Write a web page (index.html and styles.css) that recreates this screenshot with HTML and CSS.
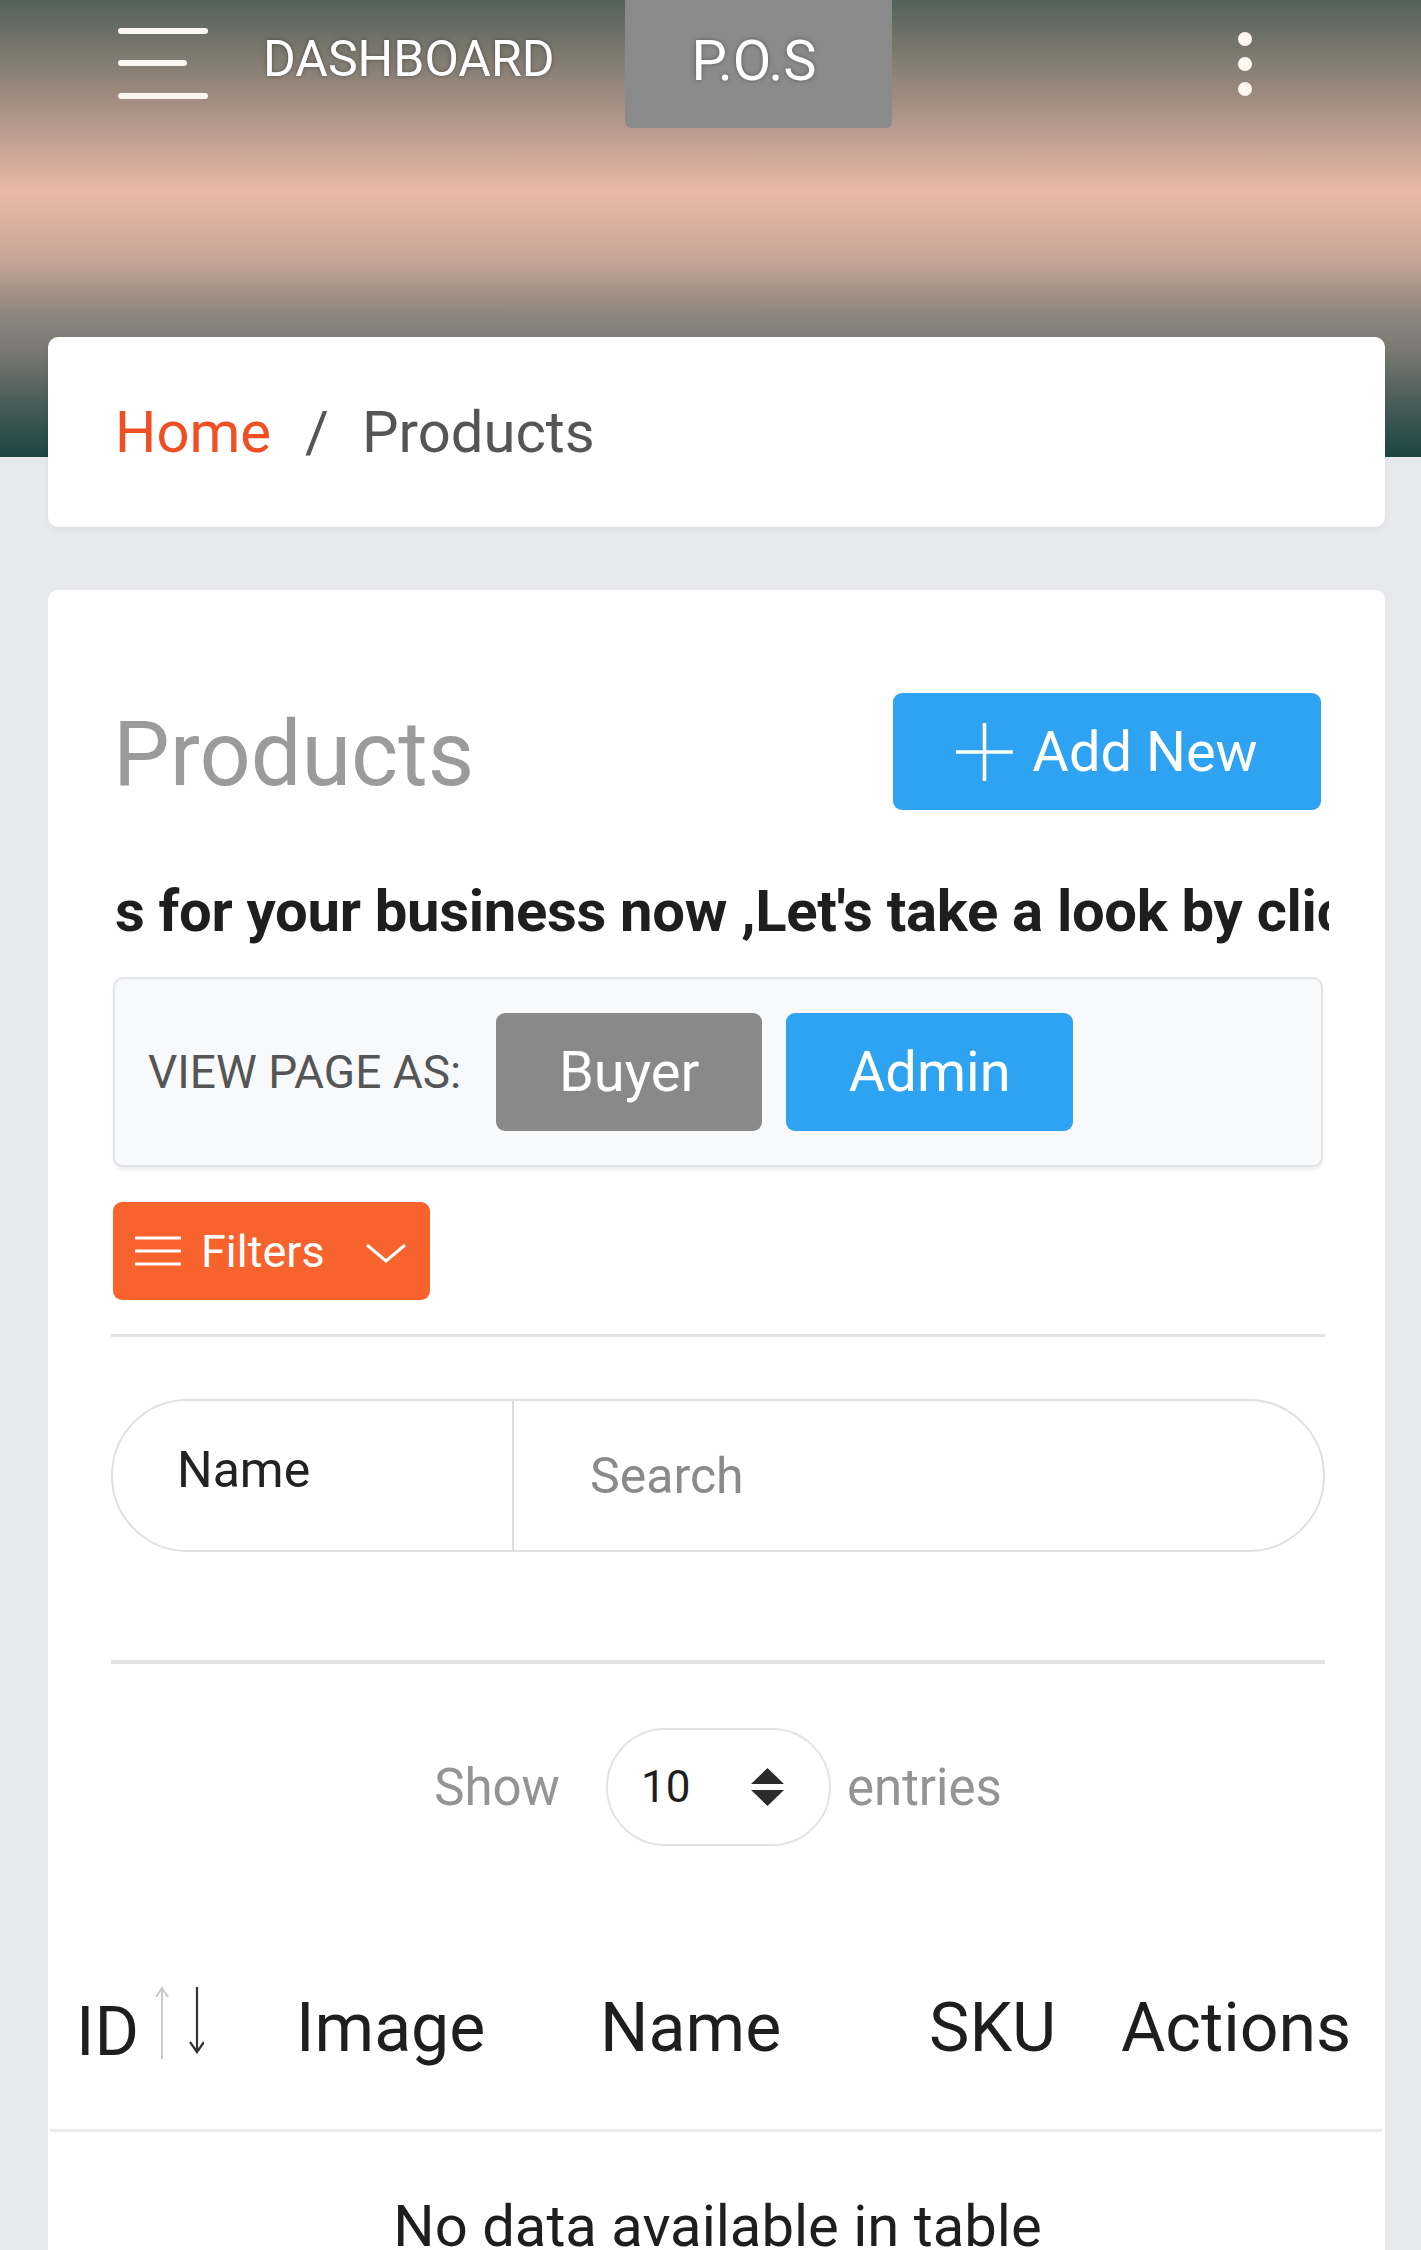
FILE: index.html
```html
<!DOCTYPE html>
<html lang="en">
<head>
<meta charset="utf-8">
<title>Products</title>
<link rel="stylesheet" href="styles.css">
</head>
<body>
<header class="hero">
  <nav class="topbar">
    <button class="burger" aria-label="Menu">
      <svg width="90" height="72" viewBox="0 0 90 72"><rect x="0" y="0" width="90" height="6" rx="3"/><rect x="0" y="32" width="69" height="6" rx="3"/><rect x="0" y="65" width="90" height="6" rx="3"/></svg>
    </button>
    <a class="nav-link nav-dash" href="#">DASHBOARD</a>
    <a class="nav-link nav-active" href="#">P.O.S</a>
    <button class="kebab" aria-label="More">
      <svg width="14" height="64" viewBox="0 0 14 64"><circle cx="7" cy="7" r="7"/><circle cx="7" cy="32" r="7"/><circle cx="7" cy="57" r="7"/></svg>
    </button>
  </nav>
</header>

<main class="content">
  <div class="crumb-card">
    <a class="crumb-home" href="#">Home</a><span class="crumb-sep">/</span><span class="crumb-current">Products</span>
  </div>

  <section class="card">
    <div class="card-body">
      <div class="card-head">
        <h1 class="title">Products</h1>
        <button class="btn btn-blue btn-add">
          <svg width="57" height="58" viewBox="0 0 57 58"><path d="M28.5 0V58M0 29H57" stroke="#fff" stroke-width="3.5" fill="none"/></svg>
          <span>Add New</span>
        </button>
      </div>

      <div class="marquee"><span>s for your business now ,Let's take a look by clicking</span></div>

      <div class="view-as">
        <span class="view-label">VIEW PAGE AS:</span>
        <button class="btn btn-gray btn-view">Buyer</button>
        <button class="btn btn-blue btn-view btn-admin">Admin</button>
      </div>

      <button class="btn btn-orange btn-filters">
        <svg width="46" height="30" viewBox="0 0 46 30"><path d="M0 2H46M0 15H46M0 28H46" stroke="#fff" stroke-width="3" fill="none"/></svg>
        <span>Filters</span>
        <svg class="chev" width="42" height="20" viewBox="0 0 42 20"><path d="M2 2L21 18L40 2" stroke="#fff" stroke-width="3" fill="none"/></svg>
      </button>

      <hr class="divider">

      <div class="search-group">
        <div class="search-field">Name</div>
        <input class="search-input" type="text" placeholder="Search">
      </div>

      <hr class="divider divider-thick">

      <div class="length-row">
        <span class="length-label">Show</span>
        <div class="length-select">
          <span>10</span>
          <svg width="33" height="38" viewBox="0 0 33 38"><path d="M16.5 0L33 16H0Z M0 22H33L16.5 38Z" fill="#2b2b2b"/></svg>
        </div>
        <span class="length-label entries">entries</span>
      </div>
    </div>

    <div class="table-wrap">
      <table class="data-table">
        <colgroup>
          <col class="c-id"><col class="c-img"><col class="c-name"><col class="c-sku"><col class="c-act">
        </colgroup>
        <thead>
          <tr>
            <th class="th-id">ID<svg class="sort" width="50" height="76" viewBox="0 0 50 76"><path d="M8 74V4M2 12L8 3L14 12" stroke="#c9c9c9" stroke-width="2" fill="none"/><path d="M43 2V66M36 57L43 67L50 57" stroke="#333" stroke-width="2.2" fill="none"/></svg></th>
            <th class="th-img">Image</th>
            <th>Name</th>
            <th>SKU</th>
            <th>Actions</th>
          </tr>
        </thead>
        <tbody>
          <tr><td class="empty" colspan="5">No data available in table</td></tr>
        </tbody>
      </table>
    </div>
  </section>
</main>
</body>
</html>
```

FILE: styles.css
```css
* { box-sizing: border-box; }
html, body { margin: 0; }
body {
  background: #e8e9ed;
  font-family: Roboto, "Noto Sans", "Liberation Sans", Arial, sans-serif;
  color: #222;
}
button { font-family: inherit; cursor: pointer; }

/* ---------- header ---------- */
.hero {
  height: 457px;
  background: linear-gradient(180deg,
    #536259 0%, #a58f84 23%, #eab9a6 42%, #c6a597 57%,
    #8c857d 69%, #7c7a74 76%, #4a5d59 88%, #1b4543 100%);
}
.topbar {
  display: flex;
  align-items: center;
  height: 128px;
  padding: 0 169px 0 118px;
}
.burger {
  background: none; border: 0; padding: 0;
  display: flex; fill: #fbf6ef;
  margin-top: -1px;
}
.nav-link {
  color: #fff;
  text-decoration: none;
  text-shadow: 0 0 4px rgba(0,0,0,.35);
}
.nav-dash { margin-left: 55px; font-size: 50px; margin-top: -10px; }
.nav-active {
  margin-left: 70px;
  width: 267px;
  height: 128px;
  background: #8a8a8a;
  border-radius: 0 0 6px 6px;
  display: flex;
  align-items: center;
  justify-content: center;
  font-size: 56px;
  align-self: flex-start;
  padding: 0 8px 6px 0;
}
.kebab {
  margin-left: auto;
  background: none; border: 0; padding: 0;
  display: flex; fill: #fdf7f0;
}

/* ---------- content ---------- */
.content {
  margin-top: -120px;
  padding: 0 36px 0 48px;
}
.crumb-card {
  height: 190px;
  background: #fff;
  border-radius: 10px;
  display: flex;
  align-items: center;
  padding-left: 67px;
  font-size: 58px;
  box-shadow: 0 2px 6px rgba(0,0,0,.05);
}
.crumb-home { color: #f04e23; text-decoration: none; }
.crumb-sep { color: #555; margin: 0 33px 0 34px; }
.crumb-current { color: #555; }

.card {
  margin-top: 63px;
  background: #fff;
  border-radius: 10px 10px 0 0;
  padding-bottom: 120px;
}
.card-body {
  padding: 103px 62px 0 65px;
}
.card-head {
  display: flex;
  align-items: center;
  justify-content: space-between;
}
.title {
  margin: 0;
  font-size: 90px;
  font-weight: 400;
  color: #9b9b9b;
  line-height: 1;
  padding-top: 6px;
}

.btn {
  border: 0;
  border-radius: 9px;
  color: #fff;
  display: inline-flex;
  align-items: center;
  justify-content: center;
}
.btn-blue { background: #2ea3f2; }
.btn-gray { background: #898989; }
.btn-orange { background: #f8622c; }

.btn-add {
  width: 428px;
  height: 117px;
  font-size: 56px;
  gap: 19px;
  padding: 0;
  margin-right: 2px;
}

.marquee {
  margin: 66px -6px 0 2px;
  font-size: 58px;
  font-weight: 700;
  line-height: 70px;
  color: #1e1e1e;
  white-space: nowrap;
  overflow: hidden;
  letter-spacing: -0.3px;
}

.view-as {
  margin-top: 31px;
  height: 190px;
  background: #f8f9fb;
  border: 2px solid #e4e5e8;
  border-radius: 10px;
  box-shadow: 0 3px 3px rgba(0,0,0,.07);
  display: flex;
  align-items: center;
  padding-left: 33px;
}
.view-label {
  font-size: 46px;
  color: #555;
  margin-right: 35px;
}
.btn-view {
  height: 118px;
  font-size: 56px;
  width: 266px;
}
.btn-admin { width: 287px; margin-left: 24px; }

.btn-filters {
  margin-top: 35px;
  margin-left: 0;
  width: 317px;
  height: 98px;
  font-size: 45px;
  justify-content: flex-start;
  padding: 0 0 0 22px;
}
.btn-filters span { margin-left: 20px; }
.btn-filters .chev { margin-left: 40px; margin-top: 4px; }

.divider {
  border: 0;
  border-top: 3px solid #e3e3e3;
  margin: 34px -2px 0 -2px;
}
.divider-thick { border-top-width: 4px; margin-top: 108px; }

.search-group {
  margin: 62px -2px 0 -2px;
  height: 153px;
  border: 2px solid #e0e0e0;
  border-radius: 77px;
  display: flex;
  overflow: hidden;
}
.search-field {
  width: 401px;
  border-right: 2px solid #dcdcdc;
  display: flex;
  align-items: center;
  padding-left: 64px;
  padding-bottom: 12px;
  font-size: 50px;
  color: #222;
}
.search-input {
  flex: 1;
  border: 0;
  outline: none;
  font-family: inherit;
  font-size: 50px;
  padding: 0 0 0 76px;
  color: #222;
  background: transparent;
}
.search-input::placeholder { color: #8a8a8a; }

.length-row {
  margin-top: 64px;
  display: flex;
  align-items: center;
  justify-content: center;
  padding-left: 0;
}
.length-label {
  font-size: 51px;
  color: #949494;
}
.length-select {
  margin-left: 46px;
  width: 225px;
  height: 118px;
  border: 2px solid #e3e3e3;
  border-radius: 59px;
  display: flex;
  align-items: center;
  padding-left: 33px;
  font-size: 44px;
  color: #1e1e1e;
}
.length-select svg { margin-left: 61px; }
.entries { margin-left: 16px; }

/* ---------- table ---------- */
.table-wrap {
  margin: 70px 3px 0 2px;
}
.data-table {
  width: 100%;
  table-layout: fixed;
  border-collapse: collapse;
}
.c-id { width: 219px; }
.c-img { width: 298px; }
.c-name { width: 329px; }
.c-sku { width: 192px; }
.c-act { width: 294px; }
.data-table th {
  height: 214px;
  padding: 12px 0 0 33px;
  text-align: left;
  font-size: 68px;
  font-weight: 400;
  color: #1e1e1e;
  border-bottom: 3px solid #ececec;
  white-space: nowrap;
  vertical-align: middle;
}
.data-table th.th-id { padding-left: 26px; }
.data-table th.th-img { padding-left: 27px; }
.sort {
  vertical-align: -6px;
  margin-left: 15px;
}
.data-table td.empty {
  text-align: center;
  font-size: 58px;
  color: #1e1e1e;
  padding-top: 60px;
  padding-left: 4px;
}
```
